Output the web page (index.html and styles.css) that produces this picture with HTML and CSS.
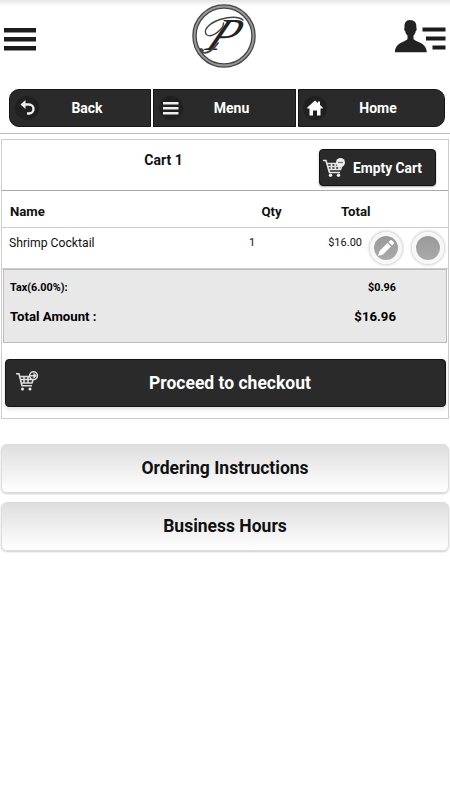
FILE: index.html
```
<!doctype html>
<html lang="en">
<head>
<meta charset="UTF-8">
<title>Cart</title>
<link rel="stylesheet" href="styles.css">
</head>
<body>
	<header class="header">
		<svg class="menu-icon" width="33" height="23" viewBox="0 0 33 23">
			<path d="M0 0h32v4.500H0zM0 9h32v4.500H0zM0 18h32v4.500H0z" fill="#1c1c1c"/>
		</svg>
		<svg class="logo" width="64" height="64" viewBox="0 0 64 64">
			<circle cx="32" cy="32" r="29.500" fill="#fff" stroke="#444" stroke-width="4.500"/>
			<circle cx="32" cy="32" r="29.500" fill="none" stroke="#999" stroke-width="2"/>
			<text class="logo-letter" transform="translate(12 46) skewX(-27)">P</text>
			<g fill="none" stroke="#444" stroke-linecap="round">
				<path d="M31.500 19C32 25 20 34 15 31C10 27 17 19 28 15.500C37 13 46 12 51 16" stroke-width="1.400"/>
				<path d="M26 39C22 45 15 51 10 48" stroke-width="1.800"/>
				<path d="M9 45.500l1.500 1" stroke-width="2.800"/>
			</g>
		</svg>
		<svg class="user-icon" width="52" height="34" viewBox="0 0 52 34">
			<path d="M16 1c4.500 0 7 3 6.300 7.500c.8.500.5 3-.6 3.700c-.4 2-1.200 3.400-2.200 4.300v3.500c2 3 13.300 3.500 13.300 13.300H1c0-9.800 10.500-10.300 12.500-13.300v-3.500c-1-.9-1.900-2.300-2.300-4.300c-1.100-.7-1.400-3.200-.6-3.700C10 4 12 1 16 1z" fill="#222"/>
			<path d="M28.500 8.500h23v4h-23zM32 17.500h19.500v4H32zM38.500 26.500h13v4h-13z" fill="#1c1c1c"/>
		</svg>
	</header>

	<nav class="nav">
		<a class="nav-item">
			<svg class="nav-icon" width="24" height="24" viewBox="0 0 24 24">
				<circle cx="12" cy="12" r="12" fill="#202020"/>
				<path d="M9 8.500h5a4.300 4.300 0 0 1 0 9h-2" fill="none" stroke="#eee" stroke-width="2.400"/>
				<path d="M10.500 4v9L5.500 8.500z" fill="#eee"/>
			</svg>
			<span>Back</span>
		</a>
		<a class="nav-item">
			<svg class="nav-icon" width="24" height="24" viewBox="0 0 24 24">
				<circle cx="12" cy="12" r="12" fill="#202020"/>
				<path d="M4 6h15.500v2.500H4zM4 11h15.500v2.500H4zM4 16h15.500v2.500H4z" fill="#eee"/>
			</svg>
			<span>Menu</span>
		</a>
		<a class="nav-item">
			<svg class="nav-icon" width="24" height="24" viewBox="0 0 24 24">
				<circle cx="12" cy="12" r="12" fill="#202020"/>
				<path d="M12 4.500l3 2.600V5.500h2v3.400l2.700 2.500v1h-2.200v7H14v-5h-4v5H6.500v-7H4.300v-1z" fill="#fff"/>
			</svg>
			<span>Home</span>
		</a>
	</nav>

	<main class="page">
		<section class="cart">
			<div class="cart-head">
				<h1 class="cart-title">Cart 1</h1>
				<button class="empty-btn">
					<svg width="23" height="20" viewBox="0 0 23 20">
						<path d="M0 2.500h3l3.500 12H17M4 5.500h10M5 8.500h12M6 11.500h11.500L19 7M8.500 5v6.500M12.300 5v6.500M16 8v3.500" fill="none" stroke="#e4e4e4" stroke-width="1.700"/>
						<circle cx="7.500" cy="17.200" r="1.700" fill="#eee"/>
						<circle cx="15.500" cy="17.200" r="1.700" fill="#eee"/>
						<circle cx="17.500" cy="4.500" r="4.500" fill="#eee"/>
						<path d="M15 4.500h5" stroke="#777" stroke-width="1.300"/>
					</svg>
					<span>Empty Cart</span>
				</button>
			</div>
			<div class="row labels">
				<span>Name</span>
				<span class="qty">Qty</span>
				<span class="total">Total</span>
			</div>
			<div class="row item">
				<span class="item-name">Shrimp Cocktail</span>
				<span class="qty">1</span>
				<span class="total">$16.00</span>
				<div class="actions">
					<button class="round-btn">
						<svg width="16" height="16" viewBox="0 0 16 16">
							<path d="M0 16l1.500-5L9.500 3L13 6.500L5 14.500zM10.500 2L12.300.3q.8-.6 1.500 0l2 2q.5.700 0 1.400L14 5.500z" fill="#fff"/>
						</svg>
					</button>
					<button class="round-btn"></button>
				</div>
			</div>
			<div class="summary">
				<div class="tax"><span>Tax(6.00%):</span><span>$0.96</span></div>
				<div class="amount"><span>Total Amount :</span><span>$16.96</span></div>
			</div>
			<button class="checkout-btn">
				<svg width="23" height="20" viewBox="0 0 23 20">
					<g fill="none" stroke="#ddd" stroke-width="1.600">
						<path d="M0 2.800h3l3 12H16M4 5.500h9M5 8.500h11M5.500 12h10.500l1-3M8 5.500V12M12 5.500V12"/>
						<circle cx="17.500" cy="4.700" r="3.900"/>
						<path d="M13.500 4.700h6M17.500 2.500l2.200 2.200l-2.200 2.200"/>
					</g>
					<circle cx="6.500" cy="18" r="1.500" fill="#eee"/>
					<circle cx="14" cy="18" r="1.500" fill="#eee"/>
				</svg>
				<span>Proceed to checkout</span>
			</button>
		</section>
	</main>

	<button class="info-btn">Ordering Instructions</button>
	<button class="info-btn">Business Hours</button>
</body>
</html>
```
FILE: styles.css
```
* { box-sizing: border-box }
body {
	margin: 0;
	background-color: #fff;
	font-family: Roboto, sans-serif;
	color: #111;
}
button {
	display: flex;
	align-items: center;
	padding: 0;
	border: 0;
	font-family: inherit;
}
svg {
	display: block;
	flex: none;
}
.header {
	display: flex;
	justify-content: space-between;
	height: 89px;
	padding: 4px 4px 0 4px;
	background: linear-gradient(#e4e6e5, #f1f3f2 3px, #fff 7px);
}
.menu-icon {
	margin-top: 24px;
}
.logo {
	margin-left: 16px;
}
.logo-letter {
	font: italic 46px "Liberation Serif", serif;
	fill: #222;
}
.user-icon {
	margin-top: 15px;
}
.nav {
	display: grid;
	grid-template-columns: 142px 143px 147px;
	column-gap: 2px;
	width: 436px;
	height: 38px;
	margin-left: 9px;
}
.nav-item {
	display: flex;
	align-items: center;
	padding-left: 5px;
	border: 1px solid #151515;
	background-color: #2a2a2a;
	color: #fff;
	font-size: 14px;
	font-weight: bold;
}
.nav-item:first-child {
	border-radius: 10px 0 0 10px;
}
.nav-item:last-child {
	padding-left: 4px;
	border-radius: 0 10px 10px 0;
}
.nav-item span {
	flex: 1;
	padding-right: 15px;
	text-align: center;
}
.page {
	margin-top: 6px;
	padding: 5px 1px 0;
	border-top: 1px solid #bbb;
}
.cart {
	height: 280px;
	border: 1px solid #ccc;
}
.cart-head {
	display: flex;
	height: 51px;
	border-bottom: 1px solid #aaa;
}
.cart-title {
	width: 323px;
	margin: 12px 0 0;
	text-align: center;
	font-size: 14px;
	line-height: 16px;
}
.empty-btn {
	gap: 7px;
	width: 117px;
	height: 37px;
	margin: 9px 0 0 -6px;
	padding-left: 3px;
	border: 1px solid #111;
	border-radius: 4px;
	background-color: #2a2a2a;
	color: #fff;
	font-size: 13.800px;
	font-weight: bold;
	box-shadow: 0 1px 2px #aaa;
}
.row {
	display: grid;
	grid-template-columns: 228px 45px 80px 1fr;
	padding-left: 7px;
	border-bottom: 1px solid #ccc;
}
.qty {
	text-align: center;
}
.labels {
	height: 37px;
	align-items: center;
	padding-top: 5px;
	font-size: 13.200px;
	font-weight: bold;
}
.labels span:first-child {
	padding-left: 1px;
}
.labels .qty {
	padding-left: 24px;
}
.labels .total {
	padding-left: 59px;
}
.item {
	height: 41px;
	padding-top: 7px;
	font-size: 11px;
	line-height: 15px;
}
.item-name {
	font-size: 12.200px;
	line-height: 17px;
}
.item .qty {
	padding-right: 15px;
}
.item .total {
	text-align: right;
}
.actions {
	display: flex;
	gap: 10px;
	margin-top: -3px;
	padding-left: 8px;
}
.round-btn {
	justify-content: center;
	width: 32px;
	height: 32px;
	border: 4px solid #f7f7f7;
	border-radius: 50%;
	background: linear-gradient(#999, #aaa);
	box-shadow: 0 0 3px 1px #ccc;
}
.summary {
	height: 74px;
	margin: 0 1px;
	padding: 11px 50px 0 6px;
	border: 1px solid #bbb;
	background-color: #e8e8e8;
	color: #000;
	font-weight: bold;
}
.tax,
.amount {
	display: flex;
	justify-content: space-between;
}
.tax {
	font-size: 10.800px;
	line-height: 14px;
}
.amount {
	margin-top: 13px;
	font-size: 13.200px;
	line-height: 17px;
}
.checkout-btn {
	width: 441px;
	height: 48px;
	margin: 16px 0 0 3px;
	padding: 0 0 1px 10px;
	border: 1px solid #151515;
	border-radius: 4px;
	background-color: #2a2a2a;
	color: #fff;
	font-size: 17.500px;
	font-weight: bold;
	box-shadow: 0 2px 4px #ddd;
}
.checkout-btn svg {
	margin-top: -4px;
}
.checkout-btn span {
	flex: 1;
	padding-right: 24px;
}
.info-btn {
	justify-content: center;
	width: 448px;
	height: 49px;
	margin: 0 1px 9px;
	padding-bottom: 1px;
	border: 1px solid #ddd;
	border-radius: 6px;
	background: linear-gradient(#dedede, #fff);
	color: #111;
	font-size: 17.500px;
	font-weight: bold;
	box-shadow: 0 1px 2px #ccc;
}
.page + .info-btn {
	margin-top: 25px;
}
```
